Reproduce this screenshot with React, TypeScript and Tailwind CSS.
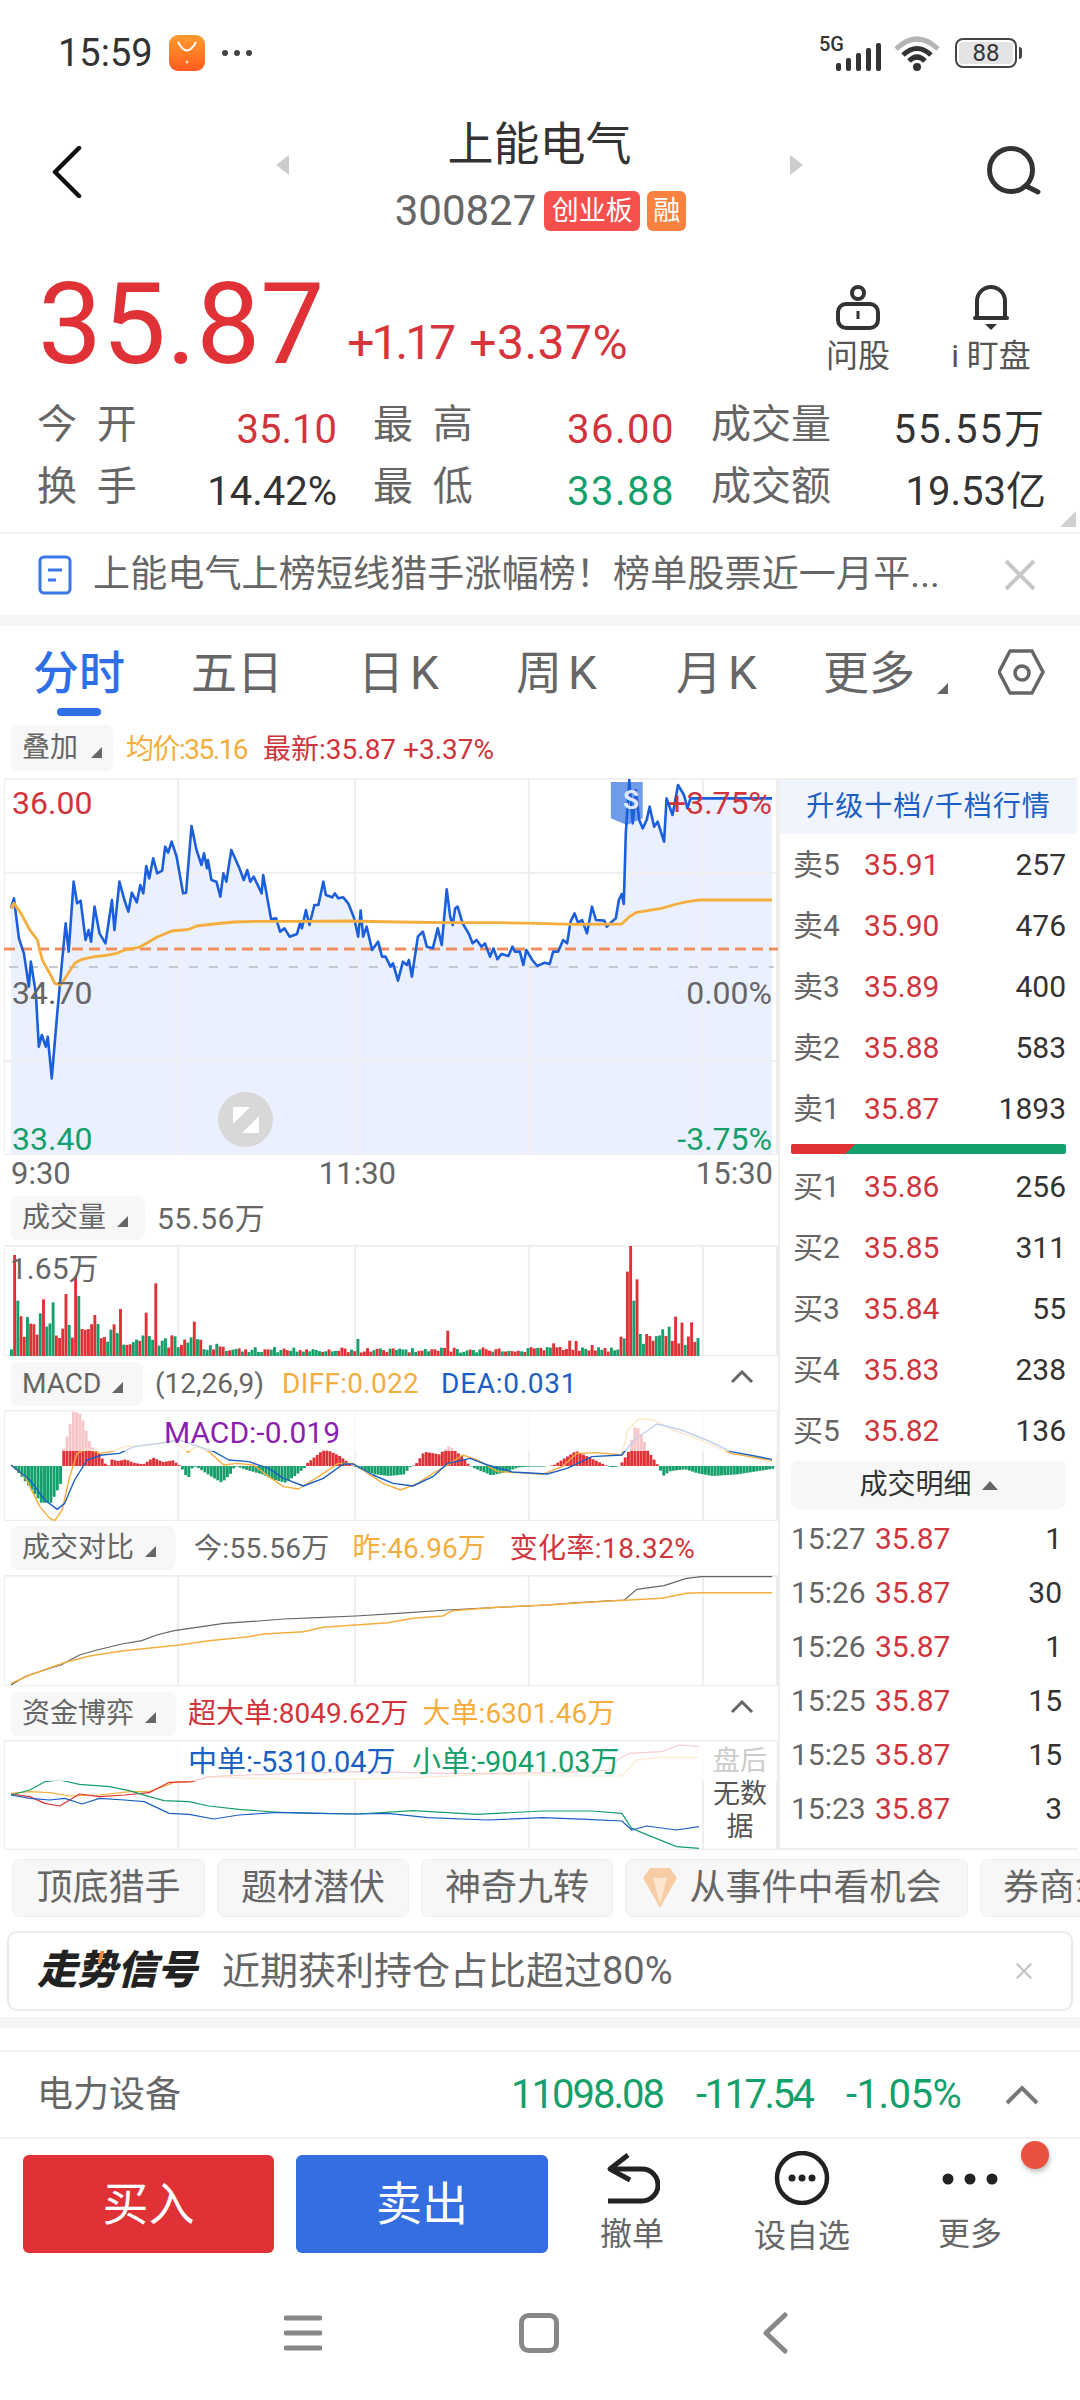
import React from "react";

const RED = "#e03137";
const GREEN = "#159f6a";

const pricePts = "22,535 28,505 38,625 48,670 58,770 62,695 72,790 78,950 84,915 92,950 96,920 104,1045 115,850 125,690 132,580 138,665 148,455 155,520 162,512 172,630 178,600 183,635 190,530 200,610 212,640 225,510 230,600 240,455 250,510 258,545 265,488 275,517 282,465 288,490 294,408 300,445 308,385 316,430 326,422 332,350 338,368 345,335 355,380 368,490 374,488 385,288 395,360 405,405 410,370 416,415 418,390 425,450 435,455 443,500 449,430 455,455 465,360 480,410 490,450 497,420 503,455 510,440 526,490 529,435 545,568 555,565 563,605 572,595 582,620 597,612 603,580 607,595 615,540 622,585 632,525 640,525 650,455 655,495 668,502 673,490 680,505 690,502 700,520 712,565 720,620 725,542 730,620 737,590 748,660 760,635 768,680 775,680 785,710 790,700 800,752 810,695 818,705 822,690 828,740 840,620 850,605 858,650 870,655 880,595 888,645 898,478 905,560 910,585 915,535 920,530 930,580 942,610 950,640 958,630 968,650 975,640 985,680 992,655 1000,688 1008,672 1022,678 1030,650 1035,665 1045,665 1052,705 1058,660 1070,690 1080,708 1095,698 1105,702 1112,665 1122,665 1132,630 1140,640 1147,575 1155,550 1162,578 1170,570 1180,610 1190,530 1198,570 1215,572 1220,590 1230,575 1238,565 1244,510 1250,492 1254,522 1258,310 1265,150 1272,280 1278,180 1285,270 1292,295 1300,270 1306,230 1315,290 1322,275 1335,335 1340,205 1352,255 1363,165 1375,195 1382,235 1388,205 1552,205";
const avgPts = "22,535 28,520 42,550 60,600 75,630 85,690 100,730 110,760 122,765 135,735 150,700 165,688 190,680 210,677 235,670 250,660 280,652 300,635 315,622 345,603 380,598 395,588 430,582 470,576 520,574 600,574 700,573 800,576 900,578 1000,578 1080,580 1150,583 1250,582 1265,560 1280,547 1330,535 1360,522 1385,514 1405,510 1552,510";
const diffPts = "22,825 50,860 80,950 100,985 110,992 125,960 140,860 155,790 175,775 200,790 225,785 250,770 300,765 350,755 365,770 378,787 395,770 420,785 450,825 475,820 510,825 540,860 570,890 600,897 640,860 680,820 710,820 740,850 770,880 805,900 840,880 870,850 900,825 930,795 960,810 1000,845 1040,848 1090,853 1130,830 1160,790 1200,788 1250,795 1262,720 1285,685 1315,690 1350,718 1400,745 1470,790 1552,812";
const deaPts = "22,825 60,870 90,930 115,958 130,940 150,870 175,810 205,795 240,790 270,770 320,760 360,750 400,770 430,785 460,810 500,815 540,835 570,865 610,888 650,865 690,822 710,822 750,855 790,880 830,888 870,860 900,820 945,805 980,825 1030,846 1100,852 1140,835 1190,800 1250,795 1275,750 1320,702 1370,720 1420,750 1470,785 1552,808";
const cmpGray = "22,495 50,470 90,450 125,433 160,405 195,390 245,372 285,362 315,345 350,332 395,322 450,310 520,303 570,297 650,292 715,288 800,280 900,270 1000,262 1100,255 1160,248 1255,240 1280,208 1335,197 1380,175 1410,170 1552,170";
const cmpOrange = "22,490 60,465 125,430 180,408 245,393 360,375 420,362 500,350 530,342 610,335 650,322 715,315 780,308 830,295 890,288 910,272 1000,262 1100,255 1200,245 1330,235 1380,220 1410,218 1552,218";
const fundBlue = "22,825 60,835 100,840 130,835 165,852 200,835 250,840 290,845 340,880 380,883 430,897 480,885 560,877 640,880 720,882 780,880 860,893 980,900 1090,893 1180,898 1250,903 1270,930 1300,918 1360,930 1405,920";
const fundGreen = "22,825 60,810 90,785 120,780 160,793 220,800 260,812 300,830 330,842 380,845 420,858 480,868 560,877 640,880 720,882 830,872 960,883 1090,873 1190,873 1250,880 1270,925 1310,950 1360,980 1405,985";
const fundRed = "22,822 60,830 90,850 120,858 160,822 200,830 250,825 300,818 340,787 385,785 420,770 500,765 600,760 720,755 800,757 900,760 1000,760 1130,758 1230,750 1240,720 1265,700 1330,695 1365,675 1405,680";
const fundOrange = "22,820 60,815 100,818 140,828 200,825 260,815 300,815 350,787 385,785 420,770 500,775 640,778 800,775 880,770 1000,762 1130,768 1250,768 1280,720 1330,712 1405,712";

let seed = 17;
const rnd = () => {
  seed = (seed * 16807) % 2147483647;
  return seed / 2147483647;
};

const interp = (table: number[][], x: number) => {
  for (let i = 0; i < table.length - 1; i++) {
    if (x >= table[i][0] && x <= table[i + 1][0]) {
      const t = (x - table[i][0]) / (table[i + 1][0] - table[i][0] || 1);
      return table[i][1] + t * (table[i + 1][1] - table[i][1]);
    }
  }
  return 0;
};

const volEnv = [[20, 40], [35, 105], [100, 110], [180, 90], [260, 60], [380, 45], [470, 22], [900, 20], [1110, 22], [1240, 24], [1250, 50], [1400, 60], [1405, 60]];
const volOver: [number, number, string][] = [
  [28, 195, RED], [33, 332, GREEN], [85, 328, RED], [103, 337, GREEN], [132, 312, RED], [150, 260, RED], [155, 318, GREEN], [190, 375, RED], [224, 403, RED], [240, 357, RED], [293, 368, RED], [310, 280, RED], [385, 395, RED], [718, 447, GREEN], [898, 422, RED], [1112, 460, RED], [1145, 452, RED], [1158, 453, RED], [1190, 465, RED], [1243, 440, RED], [1260, 245, RED], [1265, 168, RED], [1272, 332, GREEN], [1278, 268, RED], [1284, 432, GREEN], [1295, 432, RED], [1330, 418, GREEN], [1345, 410, GREEN], [1358, 380, RED], [1365, 398, RED], [1387, 397, RED], [1404, 350, RED],
];
const volBars: { x: number; top: number; c: string }[] = [];
for (let x = 20; x < 1405; x += 6.45) {
  const e = interp(volEnv, x);
  const o = volOver.find((v) => Math.abs(v[0] - x) <= 3.3);
  volBars.push(
    o
      ? { x, top: o[1], c: o[2] }
      : { x, top: 498 - e * (0.5 + rnd() * 0.75), c: rnd() > 0.55 ? RED : GREEN }
  );
}

const macdEnv = [[22, 0], [40, -30], [60, -70], [80, -110], [100, -110], [120, -50], [122, 0], [124, 45], [145, 165], [160, 155], [180, 60], [195, 40], [210, 5], [215, 0], [220, 20], [235, 15], [250, 20], [265, 10], [285, 5], [305, 25], [325, 12], [345, 17], [355, 5], [360, 0], [375, -40], [385, 0], [395, -5], [420, -30], [443, -50], [460, -25], [470, 0], [480, -5], [500, -15], [525, -25], [545, -40], [570, -50], [590, -30], [610, -5], [612, 5], [650, 52], [680, 30], [705, 2], [715, -5], [750, -25], [780, -30], [810, -25], [820, -5], [833, 5], [850, 43], [880, 35], [900, 60], [925, 30], [940, 3], [948, -5], [985, -28], [1010, -20], [1040, -4], [1060, -2], [1090, -2], [1110, 2], [1155, 45], [1190, 20], [1215, 2], [1225, -4], [1240, -2], [1245, 5], [1260, 40], [1275, 125], [1285, 100], [1300, 45], [1320, 2], [1330, -30], [1345, -15], [1375, -10], [1400, -22], [1430, -30], [1480, -25], [1552, -8]];
const macdBars: { x: number; v: number }[] = [];
for (let x = 22; x < 1552; x += 6.45) {
  macdBars.push({ x, v: interp(macdEnv, x) });
}

const Line = ({ pts, c, w = 1.5 }: { pts: string; c: string; w?: number }) => (
  <polyline points={pts} fill="none" stroke={c} strokeWidth={w} strokeLinejoin="round" vectorEffect="non-scaling-stroke" />
);

const Grid = ({ x, y, w, h, hs = [] }: { x: number; y: number; w: number; h: number; hs?: number[] }) => (
  <g stroke="#eeeeee" strokeWidth={2} fill="none">
    <rect x={x} y={y} width={w} height={h} vectorEffect="non-scaling-stroke" />
    {[358, 714, 1063, 1413].map((vx) => (
      <line key={vx} x1={vx} x2={vx} y1={y} y2={y + h} vectorEffect="non-scaling-stroke" />
    ))}
    {hs.map((hy) => (
      <line key={hy} x1={x} x2={x + w} y1={hy} y2={hy} vectorEffect="non-scaling-stroke" />
    ))}
  </g>
);

const Tri = ({ className = "" }: { className?: string }) => (
  <svg viewBox="0 0 12 12" className={className}>
    <polygon points="12,1 12,12 1,12" fill="#666" />
  </svg>
);

const Tag = ({ text, w }: { text: string; w: string }) => (
  <div className={`${w} h-[44px] shrink-0 rounded-[8px] bg-[#f7f7f7] flex items-center pl-[12px] text-[28px] text-[#666]`}>
    <span className="whitespace-nowrap">{text}</span>
    <Tri className="w-[12px] h-[12px] ml-[10px] mt-[6px]" />
  </div>
);

const Chevron = () => (
  <svg viewBox="0 0 24 14" className="w-[24px] h-[14px]">
    <polyline points="2,12 12,2 22,12" fill="none" stroke="#666" strokeWidth="3" />
  </svg>
);

const QuoteCell = ({ label, value, c }: { label: React.ReactNode; value: string; c: string }) => (
  <div className="flex items-center justify-between h-[62px]">
    <span className="text-[40px] text-[#666] whitespace-pre -mt-[4px]">{label}</span>
    <span className={`text-[40px] mt-[6px] ${c}`}>{value}</span>
  </div>
);

const bookSell = [
  ["卖5", "35.91", "257"],
  ["卖4", "35.90", "476"],
  ["卖3", "35.89", "400"],
  ["卖2", "35.88", "583"],
  ["卖1", "35.87", "1893"],
];
const bookBuy = [
  ["买1", "35.86", "256"],
  ["买2", "35.85", "311"],
  ["买3", "35.84", "55"],
  ["买4", "35.83", "238"],
  ["买5", "35.82", "136"],
];
const details = [
  ["15:27", "1"],
  ["15:26", "30"],
  ["15:26", "1"],
  ["15:25", "15"],
  ["15:25", "15"],
  ["15:23", "3"],
];

const BookRow = ({ r }: { r: string[] }) => (
  <div className="h-[61px] shrink-0 flex items-center pl-[13px] pr-[11px] text-[30px]">
    <span className="w-[71px] text-[#666] whitespace-nowrap">{r[0]}</span>
    <span className="text-[#d1343b]">{r[1]}</span>
    <span className="ml-auto text-[#333]">{r[2]}</span>
  </div>
);

const Chip = ({ w, children }: { w: string; children: React.ReactNode }) => (
  <div className={`${w} shrink-0 h-[58px] rounded-[8px] bg-[#f7f7f7] border border-[#eeeeee] flex items-center justify-center text-[36px] text-[#666] whitespace-nowrap`}>
    {children}
  </div>
);

export default function App() {
  return (
    <div className="w-[1080px] h-[2400px] bg-white overflow-hidden flex flex-col [font-family:Roboto,'Noto_Sans_CJK_SC',sans-serif] text-[#333]">
      {/* status bar */}
      <div className="h-[106px] shrink-0 flex items-center pl-[58px] pr-[58px]">
        <span className="text-[38px] text-[#333]">15:59</span>
        <div className="w-[36px] h-[36px] ml-[16px] rounded-[9px] bg-gradient-to-b from-[#ff9a2e] to-[#ff5a1f] flex items-center justify-center">
          <svg viewBox="0 0 36 36" className="w-[36px] h-[36px]">
            <path d="M9 7 Q18 24 27 7" fill="none" stroke="#fff" strokeWidth="2" />
            <circle cx="18" cy="27" r="1.5" fill="#ffd9b0" />
          </svg>
        </div>
        <svg viewBox="0 0 32 8" className="w-[32px] h-[8px] ml-[16px]">
          <circle cx="4" cy="4" r="3" fill="#444" />
          <circle cx="16" cy="4" r="3" fill="#444" />
          <circle cx="28" cy="4" r="3" fill="#444" />
        </svg>
        <div className="ml-auto flex items-center relative">
          <span className="absolute left-[-1px] top-[-5px] text-[20px] font-medium text-[#333]">5G</span>
          <svg viewBox="0 0 46 28" className="w-[46px] h-[28px] ml-[16px] mt-[7px]">
            {[[0, 20], [10, 15], [20, 10], [30, 5], [40, 0]].map(([x, y]) => (
              <rect key={x} x={x} y={y} width="5" height={28 - y} rx="2" fill="#333" />
            ))}
          </svg>
          <svg viewBox="0 0 48 36" className="w-[48px] h-[36px] ml-[11px] mt-[2px]">
            <path d="M3 13 Q24 -7 45 13" fill="none" stroke="#b5b5b5" strokeWidth="5" />
            <path d="M10 19 Q24 6 38 19" fill="none" stroke="#333" strokeWidth="5" />
            <path d="M16 25 Q24 17 32 25" fill="none" stroke="#333" strokeWidth="5" />
            <circle cx="24" cy="31" r="4" fill="#333" />
          </svg>
          <div className="w-[62px] h-[30px] ml-[14px] rounded-[8px] border-2 border-[#444] p-[2px]">
            <div className="h-full w-[54px] rounded-[4px] bg-[#e4e4e4] flex items-center justify-center text-[24px] text-[#333] leading-none">88</div>
          </div>
          <div className="w-[3px] h-[12px] ml-[2px] rounded-r bg-[#444]" />
        </div>
      </div>

      {/* header */}
      <div className="h-[154px] shrink-0 flex items-start relative">
        <svg viewBox="0 0 30 52" className="w-[30px] h-[52px] ml-[52px] mt-[40px]">
          <polyline points="27,2 3,26 27,50" fill="none" stroke="#111" strokeWidth="4.5" strokeLinecap="round" strokeLinejoin="round" />
        </svg>
        <svg viewBox="0 0 13 20" className="w-[13px] h-[20px] ml-[194px] mt-[49px]">
          <polygon points="13,0 13,20 0,10" fill="#cccccc" />
        </svg>
        <div className="flex-1 flex flex-col items-center">
          <div className="text-[46px] leading-[72px] mt-[2px] text-[#333]">上能电气</div>
          <div className="flex items-center mt-[11px] ml-[2px]">
            <span className="text-[42px] leading-[40px] text-[#666]">300827</span>
            <span className="ml-[8px] w-[96px] h-[40px] rounded-[6px] bg-[#f4504d] text-white text-[27px] flex items-center justify-center">创业板</span>
            <span className="ml-[7px] w-[39px] h-[40px] rounded-[6px] bg-[#fa8241] text-white text-[27px] flex items-center justify-center">融</span>
          </div>
        </div>
        <svg viewBox="0 0 13 20" className="w-[13px] h-[20px] mt-[49px]">
          <polygon points="0,0 0,20 13,10" fill="#cccccc" />
        </svg>
        <svg viewBox="0 0 56 52" className="w-[56px] h-[52px] ml-[183px] mr-[38px] mt-[39px]">
          <circle cx="25" cy="25" r="21.5" fill="none" stroke="#333" strokeWidth="5" />
          <line x1="40" y1="41" x2="52" y2="47" stroke="#333" strokeWidth="5" strokeLinecap="round" />
        </svg>
      </div>

      {/* price */}
      <div className="h-[136px] shrink-0 flex items-center pl-[38px] relative">
        <span className="text-[114px] leading-none text-[#e03137] mb-[8px]">35.87</span>
        <span className="text-[48px] ml-[23px] tracking-[-3px] text-[#d8343b] mt-[30px]">+1.17</span>
        <span className="text-[48px] ml-[16px] tracking-[0.5px] text-[#d8343b] mt-[30px]">+3.37%</span>
        <div className="ml-auto mr-[50px] flex gap-[60px] mt-[10px]">
          <div className="flex flex-col items-center w-[68px]">
            <svg viewBox="0 0 48 46" className="w-[48px] h-[46px]">
              <circle cx="24" cy="8" r="6" fill="none" stroke="#333" strokeWidth="4" />
              <rect x="4" y="19" width="40" height="24" rx="8" fill="none" stroke="#333" strokeWidth="4" />
              <line x1="24" y1="26" x2="24" y2="34" stroke="#333" strokeWidth="3" />
            </svg>
            <span className="text-[32px] text-[#555] leading-[50px] whitespace-nowrap">问股</span>
          </div>
          <div className="flex flex-col items-center w-[78px]">
            <svg viewBox="0 0 48 46" className="w-[48px] h-[46px]">
              <path d="M10 32 V16 A14 14 0 0 1 38 16 V32" fill="none" stroke="#333" strokeWidth="4" />
              <line x1="8" y1="33" x2="40" y2="33" stroke="#333" strokeWidth="4" strokeLinecap="round" />
              <path d="M18 39 H30 L24 45 Z" fill="#333" />
            </svg>
            <span className="text-[32px] text-[#555] leading-[50px] whitespace-nowrap">i 盯盘</span>
          </div>
        </div>
      </div>

      {/* quote grid */}
      <div className="grid grid-cols-[300px_302px_335px] gap-x-[36px] pl-[37px] shrink-0">
        <QuoteCell label="今  开" value="35.10" c="text-[#d1343b]" />
        <QuoteCell label="最  高" value="36.00" c="text-[#d1343b] tracking-[1.5px]" />
        <QuoteCell label="成交量" value="55.55万" c="text-[#333] tracking-[2px]" />
        <QuoteCell label="换  手" value="14.42%" c="text-[#333]" />
        <QuoteCell label="最  低" value="33.88" c="text-[#159f6a] tracking-[1.5px]" />
        <QuoteCell label="成交额" value="19.53亿" c="text-[#333]" />
      </div>
      <div className="h-[14px] shrink-0 flex justify-end items-end pr-[4px] border-b-2 border-[#f2f2f2]">
        <svg viewBox="0 0 16 16" className="w-[16px] h-[16px] mb-[5px]">
          <polygon points="16,0 16,16 0,16" fill="#d0d0d0" />
        </svg>
      </div>

      {/* news */}
      <div className="h-[81px] shrink-0 flex items-center pl-[38px]">
        <svg viewBox="0 0 34 40" className="w-[34px] h-[40px]">
          <rect x="2" y="2" width="30" height="36" rx="4" fill="none" stroke="#3b78e7" strokeWidth="3" />
          <line x1="10" y1="15" x2="24" y2="15" stroke="#3b78e7" strokeWidth="3" />
          <line x1="10" y1="25" x2="18" y2="25" stroke="#3b78e7" strokeWidth="3" />
        </svg>
        <span className="ml-[21px] text-[37px] tracking-[0.15px] text-[#666] whitespace-nowrap">上能电气上榜短线猎手涨幅榜！榜单股票近一月平...</span>
        <svg viewBox="0 0 32 32" className="w-[32px] h-[32px] ml-auto mr-[44px]">
          <path d="M2 2 L30 30 M30 2 L2 30" stroke="#c8c8c8" strokeWidth="4" />
        </svg>
      </div>
      <div className="h-[11px] shrink-0 bg-[#f5f5f5]" />

      {/* tabs */}
      <div className="h-[99px] shrink-0 flex items-start pt-[16px] text-[46px] leading-[62px] text-[#666] relative">
        <div className="ml-[33px] w-[92px] flex flex-col items-center">
          <span className="text-[#2f6fe5] font-medium whitespace-nowrap">分时</span>
          <div className="w-[44px] h-[8px] rounded-full bg-[#2f6fe5] mt-[4px]" />
        </div>
        <span className="ml-[66px] whitespace-nowrap">五日</span>
        <span className="ml-[75px] w-[84px] tracking-[6px] whitespace-nowrap">日K</span>
        <span className="ml-[74px] w-[84px] tracking-[6px] whitespace-nowrap">周K</span>
        <span className="ml-[76px] w-[84px] tracking-[6px] whitespace-nowrap">月K</span>
        <span className="ml-[63px] whitespace-nowrap">更多</span>
        <Tri className="w-[12px] h-[12px] ml-[21px] mt-[40px]" />
        <svg viewBox="0 0 48 50" className="w-[48px] h-[50px] ml-[50px] mt-[6px]">
          <polygon points="24,3 45,14 45,36 24,47 3,36 3,14" fill="none" stroke="#666" strokeWidth="3.5" strokeLinejoin="round" transform="rotate(90 24 25) translate(-1 1)" />
          <circle cx="24" cy="25" r="7" fill="none" stroke="#666" strokeWidth="3.5" />
        </svg>
      </div>

      {/* chart + book */}
      <div className="flex shrink-0 h-[1125px]">
        <div className="w-[778px] shrink-0 flex flex-col">
          <div className="h-[53px] flex items-start pl-[10px] text-[28px]">
            <div className="w-[103px] h-[46px] rounded-[8px] bg-[#f7f7f7] flex items-center pl-[12px] text-[#666]">
              <span className="whitespace-nowrap">叠加</span>
              <Tri className="w-[12px] h-[12px] ml-[12px] mt-[8px]" />
            </div>
            <span className="ml-[13px] mt-[4px] w-[124px] tracking-[-1.5px] text-[#f5ae3d] whitespace-nowrap">均价:35.16</span>
            <span className="ml-[13px] mt-[4px] text-[#d1343b] whitespace-nowrap">最新:35.87 +3.37%</span>
          </div>

          {/* main chart */}
          <div className="relative ml-[4px] w-[774px] h-[377px] shrink-0">
            <svg viewBox="8 144 1556 1131" preserveAspectRatio="none" className="w-full h-full block">
              <polygon points={`22,1275 ${pricePts} 1552,1275`} fill="#eaf0fe" />
              <Grid x={8} y={146} w={1554} h={1128} hs={[428, 993]} />
              <line x1="18" x2="1556" y1="711" y2="711" stroke="#c4c8d0" strokeWidth="2" strokeDasharray="9 11" vectorEffect="non-scaling-stroke" />
              <line x1="8" x2="1564" y1="657" y2="657" stroke="#f09060" strokeWidth="3" strokeDasharray="11 6" vectorEffect="non-scaling-stroke" />
              <polygon points="1228,156 1292,156 1292,265 1260,285 1228,265" fill="#6f9ce9" />
              <Line pts={pricePts} c="#1b5fdc" w={2.6} />
              <Line pts={avgPts} c="#f5ae3d" w={2.8} />
            </svg>
            <div className="absolute left-[8px] top-[1px] text-[32px] text-[#d1343b]">36.00</div>
            <div className="absolute left-[8px] top-[191px] text-[32px] text-[#666]">34.70</div>
            <div className="absolute left-[8px] top-[337px] text-[32px] text-[#159f6a]">33.40</div>
            <div className="absolute right-[6px] top-[1px] text-[32px] text-[#d1343b]">+3.75%</div>
            <div className="absolute right-[6px] top-[191px] text-[32px] text-[#666]">0.00%</div>
            <div className="absolute right-[6px] top-[337px] text-[32px] text-[#159f6a]">-3.75%</div>
            <div className="absolute left-[615px] top-[3px] w-[24px] text-center text-[26px] font-bold text-[#dfe9fb]">S</div>
            <div className="absolute left-[214px] top-[314px] w-[55px] h-[55px] rounded-full bg-[#d8d8d8] flex items-center justify-center">
              <svg viewBox="0 0 26 26" className="w-[26px] h-[26px]">
                <polygon points="0,0 17,0 0,17" fill="#fff" />
                <polygon points="26,26 9,26 26,9" fill="#fff" />
              </svg>
            </div>
          </div>

          <div className="h-[41px] shrink-0 flex items-center pl-[11px] pr-[5px] pb-[3px] text-[31px] text-[#666]">
            <span>9:30</span>
            <span className="ml-[248px]">11:30</span>
            <span className="ml-auto">15:30</span>
          </div>

          {/* volume */}
          <div className="h-[49px] shrink-0 flex items-start pl-[10px] gap-[12px]">
            <Tag text="成交量" w="w-[135px]" />
            <span className="text-[30px] tracking-[0.5px] text-[#666] whitespace-nowrap">55.56万</span>
          </div>
          <div className="relative ml-[4px] w-[774px] h-[111px] shrink-0">
            <svg viewBox="8 165 1556 333" preserveAspectRatio="none" className="w-full h-full block">
              <Grid x={8} y={167} w={1554} h={331} />
              {volBars.map((b, i) => (
                <rect key={i} x={b.x} y={b.top} width={5.8} height={498 - b.top} fill={b.c} />
              ))}
            </svg>
            <div className="absolute left-[6px] top-[1px] text-[30px] text-[#666]">1.65万</div>
          </div>

          {/* macd */}
          <div className="h-[54px] shrink-0 flex items-start pl-[10px] pt-[6px] text-[28px]">
            <Tag text="MACD" w="w-[133px]" />
            <span className="ml-[12px] mt-[1px] text-[#666] whitespace-nowrap">(12,26,9)</span>
            <span className="ml-[18px] mt-[1px] text-[#f5ae3d] tracking-[0.3px] whitespace-nowrap">DIFF:0.022</span>
            <span className="ml-[22px] mt-[1px] text-[#1b5fc4] tracking-[0.7px] whitespace-nowrap">DEA:0.031</span>
            <div className="ml-auto mr-[24px] mt-[8px]"><Chevron /></div>
          </div>
          <div className="relative ml-[4px] w-[774px] h-[111px] shrink-0">
            <svg viewBox="8 660 1556 333" preserveAspectRatio="none" className="w-full h-full block">
              <Grid x={8} y={662} w={1554} h={330} />
              {macdBars.map((b, i) => (
                <rect key={i} x={b.x} y={b.v > 0 ? 828 - b.v : 828} width={5.8} height={Math.abs(b.v)} fill={b.v > 0 ? RED : GREEN} />
              ))}
              <Line pts={diffPts} c="#f5ae3d" w={1.4} />
              <Line pts={deaPts} c="#1b5fc4" w={1.4} />
              <rect x="10" y="664" width="1552" height="119" fill="#fff" fillOpacity="0.72" />
            </svg>
            <div className="absolute left-[160px] top-[0px] text-[30px] text-[#8a1fb0] whitespace-nowrap">MACD:-0.019</div>
          </div>

          {/* compare */}
          <div className="h-[54px] shrink-0 flex items-start pl-[10px] pt-[5px] text-[28px]">
            <Tag text="成交对比" w="w-[166px]" />
            <span className="ml-[18px] mt-[2px] tracking-[0.3px] text-[#666] whitespace-nowrap">今:55.56万</span>
            <span className="ml-[23px] mt-[2px] text-[#f5ae3d] whitespace-nowrap">昨:46.96万</span>
            <span className="ml-[24px] mt-[2px] tracking-[0.4px] text-[#d1343b] whitespace-nowrap">变化率:18.32%</span>
          </div>
          <div className="relative ml-[4px] w-[774px] h-[111px] shrink-0">
            <svg viewBox="8 165 1556 333" preserveAspectRatio="none" className="w-full h-full block">
              <Grid x={8} y={167} w={1554} h={331} />
              <Line pts={cmpGray} c="#666" w={1.2} />
              <Line pts={cmpOrange} c="#f5ae3d" w={1.5} />
            </svg>
          </div>

          {/* funds */}
          <div className="h-[54px] shrink-0 flex items-start pl-[10px] pt-[6px] text-[28px]">
            <Tag text="资金博弈" w="w-[166px]" />
            <span className="ml-[12px] mt-[1px] text-[#d1343b] whitespace-nowrap">超大单:8049.62万</span>
            <span className="ml-[14px] mt-[1px] text-[#f5ae3d] whitespace-nowrap">大单:6301.46万</span>
            <div className="ml-auto mr-[24px] mt-[8px]"><Chevron /></div>
          </div>
          <div className="relative ml-[4px] w-[774px] h-[110px] shrink-0">
            <svg viewBox="8 660 1556 330" preserveAspectRatio="none" className="w-full h-full block">
              <Grid x={8} y={662} w={1554} h={327} />
              <Line pts={fundOrange} c="#f5ae3d" w={1.2} />
              <Line pts={fundRed} c={RED} w={1.2} />
              <Line pts={fundGreen} c={GREEN} w={1.2} />
              <Line pts={fundBlue} c="#1b5fc4" w={1.2} />
              <rect x="10" y="664" width="1552" height="119" fill="#fff" fillOpacity="0.76" />
            </svg>
            <div className="absolute left-[184px] top-[1px] text-[29px] text-[#1b5fc4] whitespace-nowrap">中单:-5310.04万</div>
            <div className="absolute left-[408px] top-[1px] text-[29px] text-[#159f6a] whitespace-nowrap">小单:-9041.03万</div>
            <div className="absolute left-[709px] top-[5px] w-[54px] text-center text-[27px] leading-[33px] text-[#555]">
              <span className="text-[#cccccc]">盘后</span>
              <br />
              无数
              <br />
              据
            </div>
          </div>
        </div>

        {/* order book */}
        <div className="w-[302px] shrink-0 pt-[53px] flex flex-col">
          <div className="flex-1 w-[299px] border-l-2 border-y-2 border-[#eeeeee] flex flex-col">
            <div className="h-[54px] bg-[#eff4fd] flex items-center justify-center text-[28px] tracking-[1px] text-[#1b5fc4] shrink-0 whitespace-nowrap">升级十档/千档行情</div>
            {bookSell.map((r) => (
              <BookRow key={r[0]} r={r} />
            ))}
            <div className="mt-[5px] ml-[11px] w-[275px] h-[10px] shrink-0 rounded-[2px] bg-[linear-gradient(135deg,#e03137_45px,#159f6a_46px)]" />
            <div className="h-[2px] shrink-0" />
            {bookBuy.map((r) => (
              <BookRow key={r[0]} r={r} />
            ))}
            <div className="ml-[11px] w-[275px] h-[48px] shrink-0 rounded-[8px] bg-[#f7f7f7] flex items-center justify-center text-[28px] text-[#333]">
              <span className="whitespace-nowrap">成交明细</span>
              <svg viewBox="0 0 16 9" className="w-[16px] h-[9px] ml-[10px]">
                <polygon points="8,0 16,9 0,9" fill="#666" />
              </svg>
            </div>
            <div className="h-[2px] shrink-0" />
            {details.map((r, i) => (
              <div key={i} className="h-[54px] shrink-0 flex items-center pl-[11px] pr-[15px] text-[30px]">
                <span className="w-[84px] text-[#666]">{r[0]}</span>
                <span className="text-[#d1343b]">35.87</span>
                <span className="ml-auto text-[#333]">{r[1]}</span>
              </div>
            ))}
          </div>
        </div>
      </div>

      {/* chips */}
      <div className="shrink-0 flex gap-[12px] pl-[12px] mt-[9px] overflow-hidden">
        <Chip w="w-[193px]">顶底猎手</Chip>
        <Chip w="w-[192px]">题材潜伏</Chip>
        <Chip w="w-[192px]">神奇九转</Chip>
        <Chip w="w-[343px]">
          <svg viewBox="0 0 34 40" className="w-[34px] h-[40px] mr-[12px] -ml-[8px]">
            <polygon points="7,0 27,0 34,10 17,40 0,10" fill="#f8cda6" />
            <polygon points="10,10 24,10 17,36" fill="#fbe6d2" />
          </svg>
          从事件中看机会
        </Chip>
        <Chip w="w-[200px] justify-start pl-[22px]">券商金股</Chip>
      </div>

      {/* signal */}
      <div className="shrink-0 mt-[14px] mx-[7px] h-[80px] rounded-[10px] border-2 border-[#eaeaea] flex items-center pl-[28px] relative">
        <span className="text-[40px] font-black italic text-[#222] whitespace-nowrap relative">
          走势信号
          <span className="absolute left-[62px] top-[10px] w-[4px] h-[12px] -skew-x-12 bg-[#f08a3c]" />
        </span>
        <span className="ml-[25px] text-[38px] text-[#666] whitespace-nowrap">近期获利持仓占比超过80%</span>
        <svg viewBox="0 0 20 20" className="w-[18px] h-[18px] ml-auto mr-[38px]">
          <path d="M2 2 L18 18 M18 2 L2 18" stroke="#c4c4c4" strokeWidth="2.5" />
        </svg>
      </div>

      <div className="h-[11px] shrink-0 mt-[6px] bg-[#f5f5f5]" />

      {/* sector */}
      <div className="h-[87px] shrink-0 mt-[22px] border-t-2 border-[#f2f2f2] flex items-center pl-[37px]">
        <span className="w-[144px] text-[36px] text-[#666] whitespace-nowrap">电力设备</span>
        <span className="ml-[330px] w-[150px] tracking-[-2px] text-[40px] text-[#159f6a] whitespace-nowrap">11098.08</span>
        <span className="ml-[35px] w-[115px] tracking-[-2.5px] text-[40px] text-[#159f6a] whitespace-nowrap">-117.54</span>
        <span className="ml-[35px] w-[116px] tracking-[-0.5px] text-[40px] text-[#159f6a] whitespace-nowrap">-1.05%</span>
        <svg viewBox="0 0 34 20" className="w-[34px] h-[20px] ml-[43px]">
          <polyline points="2,18 17,3 32,18" fill="none" stroke="#777" strokeWidth="4" />
        </svg>
      </div>

      {/* toolbar */}
      <div className="shrink-0 border-t-2 border-[#f2f2f2] relative flex items-start pt-[16px] pl-[23px] h-[114px]">
        <div className="w-[251px] h-[98px] rounded-[6px] bg-[#e03137] flex items-center justify-center text-white text-[46px]">买入</div>
        <div className="w-[252px] h-[98px] ml-[22px] rounded-[6px] bg-[#346ee0] flex items-center justify-center text-white text-[46px]">卖出</div>
        <div className="w-[64px] ml-[52px] flex flex-col items-center -mt-[2px]">
          <svg viewBox="0 0 56 52" className="w-[56px] h-[52px]">
            <polyline points="24,2 6,16 26,27" fill="none" stroke="#222" strokeWidth="5" strokeLinejoin="round" />
            <path d="M8 16 H38 A16 16 0 0 1 38 48 H4" fill="none" stroke="#222" strokeWidth="5" />
          </svg>
          <span className="text-[32px] text-[#666] leading-[50px] mt-[4px] whitespace-nowrap">撤单</span>
        </div>
        <div className="w-[96px] ml-[90px] flex flex-col items-center -mt-[4px]">
          <svg viewBox="0 0 56 54" className="w-[56px] h-[54px]">
            <circle cx="28" cy="27" r="25" fill="none" stroke="#222" strokeWidth="4.5" />
            <circle cx="18" cy="27" r="3.5" fill="#222" />
            <circle cx="28" cy="27" r="3.5" fill="#222" />
            <circle cx="38" cy="27" r="3.5" fill="#222" />
          </svg>
          <span className="text-[32px] text-[#666] leading-[50px] mt-[6px] whitespace-nowrap">设自选</span>
        </div>
        <div className="w-[64px] ml-[88px] flex flex-col items-center -mt-[2px]">
          <svg viewBox="0 0 56 52" className="w-[56px] h-[52px]">
            <circle cx="6" cy="26" r="5.5" fill="#222" />
            <circle cx="28" cy="26" r="5.5" fill="#222" />
            <circle cx="50" cy="26" r="5.5" fill="#222" />
          </svg>
          <span className="text-[32px] text-[#666] leading-[50px] mt-[4px] whitespace-nowrap">更多</span>
        </div>
        <div className="absolute left-[1021px] top-[2px] w-[28px] h-[28px] rounded-full bg-[#e8503f] shadow-[1px_3px_5px_rgba(0,0,0,0.25)]" />
      </div>

      {/* nav */}
      <div className="h-[147px] shrink-0 relative flex items-start pt-[64px] pl-[284px]">
        <svg viewBox="0 0 38 36" className="w-[38px] h-[36px]">
          <path d="M2 3 H36 M2 18 H36 M2 33 H36" stroke="#888" strokeWidth="5" strokeLinecap="round" />
        </svg>
        <svg viewBox="0 0 40 40" className="w-[40px] h-[40px] ml-[197px] -mt-[2px]">
          <rect x="2.5" y="2.5" width="35" height="35" rx="7" fill="none" stroke="#888" strokeWidth="5" />
        </svg>
        <svg viewBox="0 0 26 42" className="w-[26px] h-[42px] ml-[203px] -mt-[3px]">
          <polyline points="23,3 4,21 23,39" fill="none" stroke="#888" strokeWidth="5" strokeLinecap="round" strokeLinejoin="round" />
        </svg>
      </div>
    </div>
  );
}
